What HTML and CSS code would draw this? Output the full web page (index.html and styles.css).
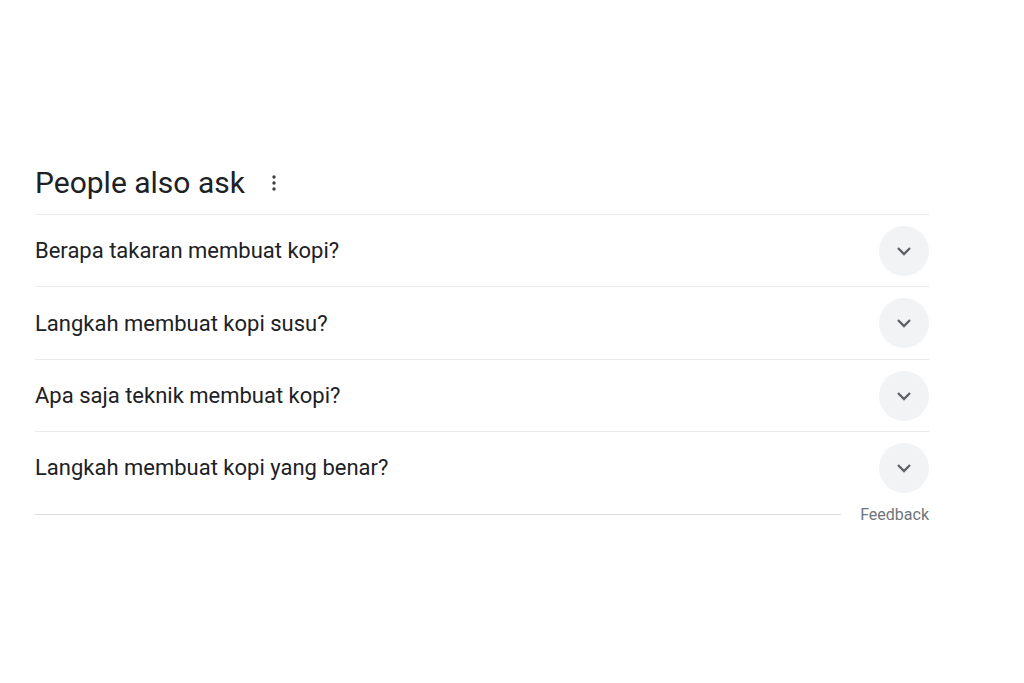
FILE: index.html
```html
<!DOCTYPE html>
<html lang="en">
<head>
    <meta charset="UTF-8">
    <meta name="viewport" content="width=device-width, initial-scale=1.0">
    <title>People also ask</title>
    <link rel="stylesheet" href="styles.css">
</head>
<body>
    <div class="container">
        <div class="heading">
            <h2>People also ask</h2>
            <span class="menu">
                <svg width="6" height="18" viewBox="0 0 6 18">
                    <circle cx="3" cy="3" r="1.7" fill="#3c4043"/>
                    <circle cx="3" cy="9" r="1.7" fill="#3c4043"/>
                    <circle cx="3" cy="15" r="1.7" fill="#3c4043"/>
                </svg>
            </span>
        </div>
        <div class="questions">
            <div class="question">
                <span>Berapa takaran membuat kopi?</span>
                <span class="toggle">
                    <svg width="16" height="10" viewBox="0 0 16 10"><path d="M2 2l6 6 6-6" fill="none" stroke="#5f6368" stroke-width="2.4"/></svg>
                </span>
            </div>
            <div class="question">
                <span>Langkah membuat kopi susu?</span>
                <span class="toggle">
                    <svg width="16" height="10" viewBox="0 0 16 10"><path d="M2 2l6 6 6-6" fill="none" stroke="#5f6368" stroke-width="2.4"/></svg>
                </span>
            </div>
            <div class="question">
                <span>Apa saja teknik membuat kopi?</span>
                <span class="toggle">
                    <svg width="16" height="10" viewBox="0 0 16 10"><path d="M2 2l6 6 6-6" fill="none" stroke="#5f6368" stroke-width="2.4"/></svg>
                </span>
            </div>
            <div class="question">
                <span>Langkah membuat kopi yang benar?</span>
                <span class="toggle">
                    <svg width="16" height="10" viewBox="0 0 16 10"><path d="M2 2l6 6 6-6" fill="none" stroke="#5f6368" stroke-width="2.4"/></svg>
                </span>
            </div>
        </div>
        <div class="feedback">
            <div class="line"></div>
            <a href="#">Feedback</a>
        </div>
    </div>
</body>
</html>
```

FILE: styles.css
```css
* {
    margin: 0;
    padding: 0;
    box-sizing: border-box;
}

body {
    font-family: Roboto, 'Noto Sans', Arial, sans-serif;
    background: #ffffff;
    color: #202124;
}

.container {
    width: 894px;
    margin-left: 35px;
    padding-top: 165px;
}

/* Heading */
.heading {
    display: flex;
    align-items: center;
    padding-bottom: 13px;
    border-bottom: 1px solid #e8eaed;
}

.heading h2 {
    font-size: 30px;
    font-weight: 400;
    line-height: 36px;
}

.menu {
    display: flex;
    margin-left: 26px;
}

/* Questions */
.question {
    display: flex;
    align-items: center;
    justify-content: space-between;
    height: 72px;
    border-bottom: 1px solid #e8eaed;
    font-size: 22px;
}

.question:nth-child(2) {
    height: 73px;
}

.question:last-child {
    border-bottom: none;
    height: 71px;
}

.toggle {
    display: flex;
    align-items: center;
    justify-content: center;
    width: 50px;
    height: 50px;
    border-radius: 50%;
    background: #f1f3f4;
}

/* Feedback */
.feedback {
    display: flex;
    align-items: center;
    height: 22px;
}

.feedback .line {
    flex: 1;
    height: 1px;
    background: #dadce0;
    margin-right: 19px;
}

.feedback a {
    font-size: 16px;
    color: #70757a;
    text-decoration: none;
}
```
